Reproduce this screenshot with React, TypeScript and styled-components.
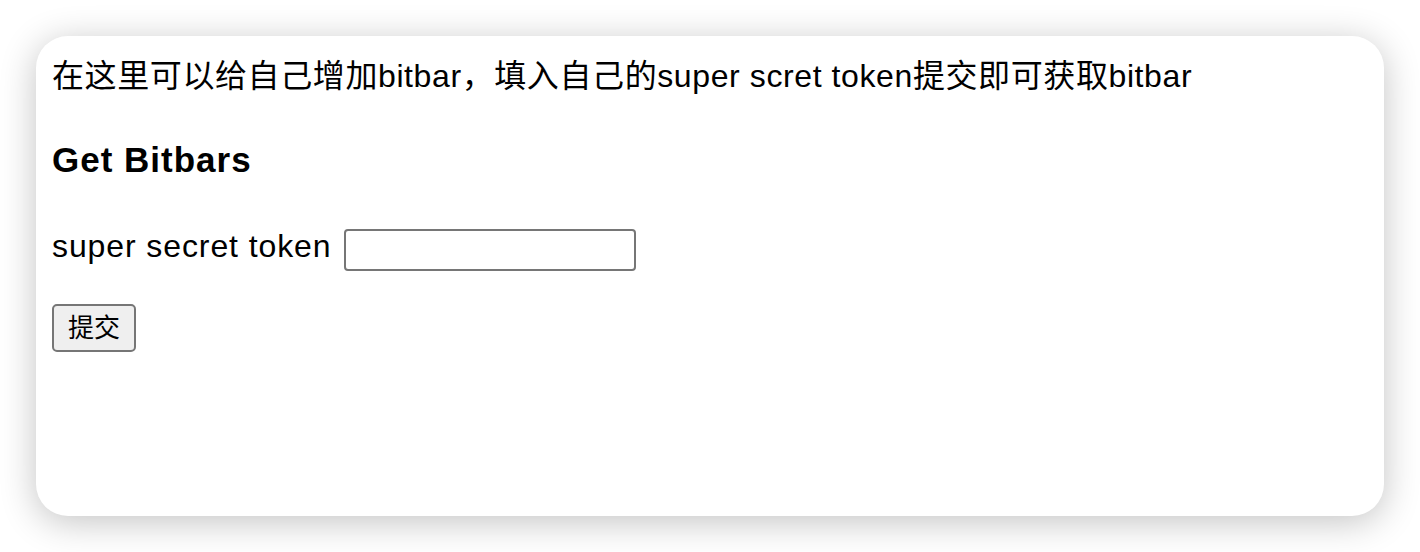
import React from "react";
import styled, { createGlobalStyle } from "styled-components";

const GlobalStyle = createGlobalStyle`
  html, body {
    margin: 0;
    padding: 0;
    background: #ffffff;
  }
  body {
    font-family: "Liberation Sans", "Noto Sans CJK SC", Arial, sans-serif;
    color: #000000;
  }
  * { box-sizing: border-box; }
`;

const Page = styled.div`
  width: 1420px;
  height: 552px;
  padding: 36px;
  overflow: hidden;
`;

const Card = styled.div`
  width: 1348px;
  height: 480px;
  background: #ffffff;
  border-radius: 32px;
  box-shadow: 0 6px 36px rgba(0, 0, 0, 0.24);
  padding: 20px 16px 0;
  display: flex;
  flex-direction: column;
  align-items: flex-start;
`;

const Intro = styled.p`
  margin: 0;
  font-size: 32px;
  line-height: 40px;
  letter-spacing: 0.6px;
`;

const Title = styled.h3`
  margin: 44px 0 0;
  font-size: 35px;
  line-height: 40px;
  font-weight: 700;
  letter-spacing: 1px;
`;

const Form = styled.form`
  display: flex;
  flex-direction: column;
  align-items: flex-start;
  margin-top: 49px;
`;

const Row = styled.div`
  display: flex;
  align-items: flex-start;
  gap: 13px;
`;

const Label = styled.label`
  font-size: 32px;
  line-height: 34px;
  letter-spacing: 0.9px;
`;

const TokenInput = styled.input`
  width: 292px;
  height: 42px;
  border: 2px solid #767676;
  border-radius: 4px;
  background: #ffffff;
  padding: 2px 4px;
  font-size: 26px;
  outline: none;
`;

const Submit = styled.button`
  margin-top: 33px;
  width: 84px;
  height: 48px;
  border: 2px solid #767676;
  border-radius: 5px;
  background: #efefef;
  font-family: "Liberation Sans", "Noto Sans CJK SC", sans-serif;
  font-size: 26px;
  line-height: 1;
  color: #000000;
  padding: 0;
  display: flex;
  align-items: center;
  justify-content: center;
`;

export default function App() {
  return (
    <>
      <GlobalStyle />
      <Page>
        <Card>
          <Intro>
            在这里可以给自己增加bitbar，填入自己的super scret token提交即可获取bitbar
          </Intro>
          <Title>Get Bitbars</Title>
          <Form onSubmit={(e) => e.preventDefault()}>
            <Row>
              <Label htmlFor="token">super secret token</Label>
              <TokenInput id="token" type="text" />
            </Row>
            <Submit type="submit">提交</Submit>
          </Form>
        </Card>
      </Page>
    </>
  );
}
